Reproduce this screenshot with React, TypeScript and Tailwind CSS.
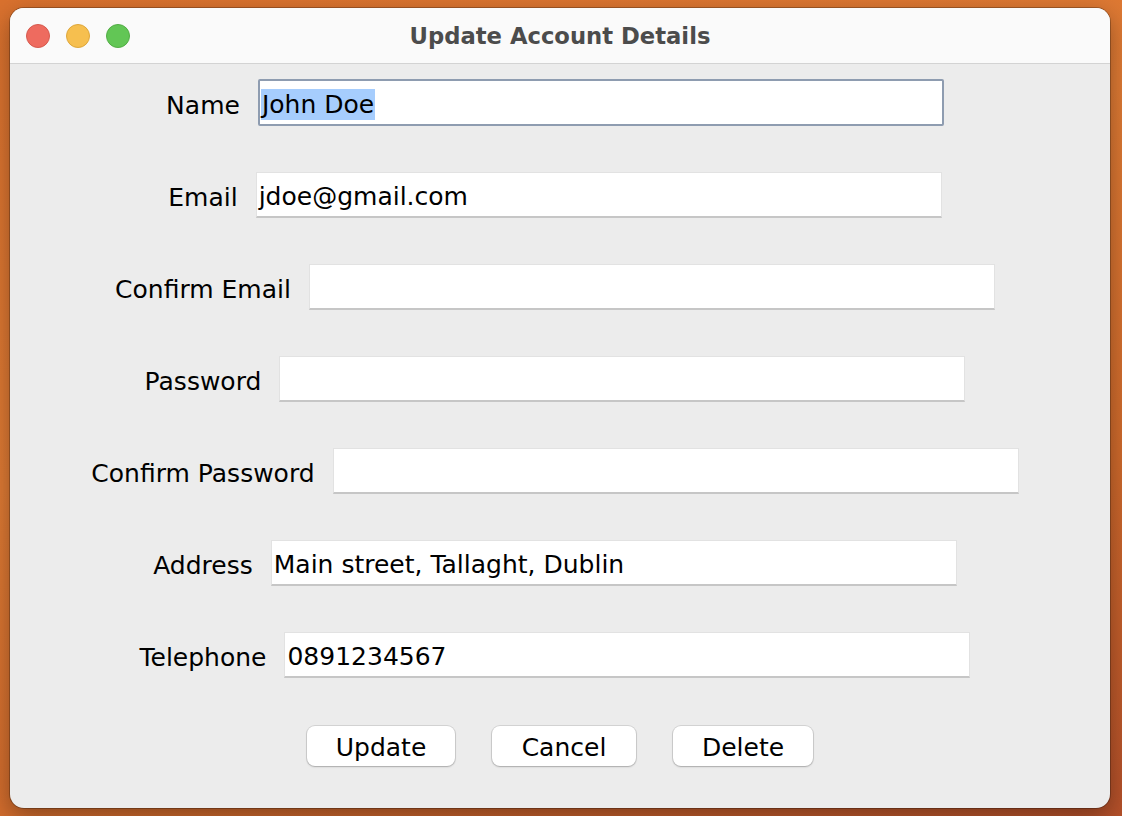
import React from "react";

const font = { fontFamily: '"DejaVu Sans", "Lucida Grande", sans-serif' };

type Row = { label: string; value?: string; focused?: boolean };

const rows: Row[] = [
  { label: "Name", value: "John Doe", focused: true },
  { label: "Email", value: "jdoe@gmail.com" },
  { label: "Confirm Email" },
  { label: "Password" },
  { label: "Confirm Password" },
  { label: "Address", value: "Main street, Tallaght, Dublin" },
  { label: "Telephone", value: "0891234567" },
];

function Field({ row }: { row: Row }) {
  if (row.focused) {
    return (
      <div className="w-[686px] h-[47px] bg-white border-2 border-[#8e9cb0] rounded-[2px] flex items-center pl-[1px] pt-[4px]">
        <span className="bg-[#a6cdfd] text-black leading-[31px] px-[1px]">{row.value}</span>
      </div>
    );
  }
  return (
    <div className="w-[686px] h-[46px] bg-white border border-[#e2e2e2] border-b-[2px] border-b-[#c6c6c6] flex items-center pl-[2px] pt-[5px]">
      <span className="text-black">{row.value ?? ""}</span>
    </div>
  );
}

export default function App() {
  return (
    <div
      className="w-[1122px] h-[816px] overflow-hidden pt-[8px] pl-[10px] bg-[linear-gradient(160deg,#d9712e_0%,#de7a34_40%,#cf6a2c_70%,#b4502a_100%)]"
      style={font}
    >
      <div className="w-[1100px] h-[800px] rounded-[14px] overflow-hidden bg-[#ececec] shadow-[0_0_0_1px_rgba(0,0,0,0.25),0_8px_24px_rgba(0,0,0,0.35)] flex flex-col">
        <div className="h-[56px] shrink-0 bg-[#fafafa] border-b border-[#d3d3d3] grid grid-cols-[1fr_auto_1fr] items-center">
          <div className="flex items-center gap-[16px] pl-[16px]">
            <span className="w-[24px] h-[24px] rounded-full bg-[#ee6b5f] border border-[#d65a4e]" />
            <span className="w-[24px] h-[24px] rounded-full bg-[#f6bf4f] border border-[#dea73b]" />
            <span className="w-[24px] h-[24px] rounded-full bg-[#62c655] border border-[#52ad45]" />
          </div>
          <div className="text-[22.7px] font-bold text-[#4c4c4c] pt-[2px]">Update Account Details</div>
          <div />
        </div>
        <div className="flex-1 flex flex-col items-center pt-[15px] text-[25px] text-black">
          <div className="flex flex-col items-center gap-[45px] pr-[10px]">
            {rows.map((r) => (
              <div key={r.label} className="flex items-center gap-[18px] h-[47px]">
                <span className="pt-[6px]">{r.label}</span>
                <Field row={r} />
              </div>
            ))}
          </div>
          <div className="flex items-center gap-[37px] mt-[48px]">
            <button className="w-[148px] h-[40px] pt-[3px] bg-white rounded-[8px] shadow-[0_0_0_1px_rgba(0,0,0,0.1),0_1px_2px_rgba(0,0,0,0.2)] text-black">Update</button>
            <button className="w-[144px] h-[40px] pt-[3px] bg-white rounded-[8px] shadow-[0_0_0_1px_rgba(0,0,0,0.1),0_1px_2px_rgba(0,0,0,0.2)] text-black">Cancel</button>
            <button className="w-[140px] h-[40px] pt-[3px] bg-white rounded-[8px] shadow-[0_0_0_1px_rgba(0,0,0,0.1),0_1px_2px_rgba(0,0,0,0.2)] text-black">Delete</button>
          </div>
        </div>
      </div>
    </div>
  );
}
